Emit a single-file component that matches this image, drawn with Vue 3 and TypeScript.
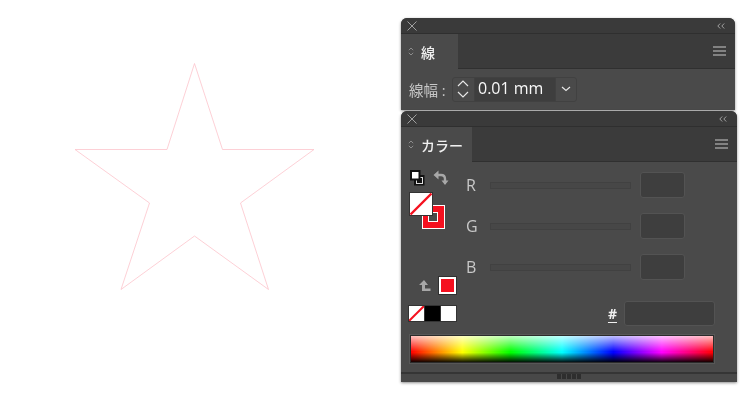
<script setup lang="ts">
// Illustrator-style canvas: a thin star on the artboard, stroke + colour panels docked right.
const channels = ['R', 'G', 'B']
</script>

<template>
  <div class="stage">
    <svg class="artboard" width="401" height="402" viewBox="0 0 401 402">
      <polygon
        points="194.5,63.5 222.5,149.5 314,149.5 240.5,203 268.5,289.5 194.5,236 121,289.5 149.5,203 75,149.5 167,149.5"
        fill="none"
        stroke="#fdc4cb"
        stroke-width="0.8"
      />
    </svg>

    <div class="dock">
      <section class="panel stroke-panel">
        <header class="titlebar">
          <svg class="close" width="10" height="10" viewBox="0 0 10 10"><path d="M0.5 0.5l9 9M9.5 0.5l-9 9" /></svg>
          <svg class="collapse" width="8" height="6" viewBox="0 0 8 6"><path d="M3.2 0.5L0.8 3l2.4 2.5M7.2 0.5L4.8 3l2.4 2.5" /></svg>
        </header>
        <div class="tabbar">
          <div class="tab tab-stroke">
            <svg class="updown" width="6" height="9" viewBox="0 0 6 9"><path d="M0.8 3.2L3 1l2.2 2.2M0.8 5.8L3 8l2.2-2.2" /></svg>
            <span>線</span>
          </div>
          <svg class="menu" width="13" height="10" viewBox="0 0 13 10"><path d="M0 1h13M0 5h13M0 9h13" /></svg>
        </div>
        <div class="stroke-body">
          <span class="stroke-label">線幅 :</span>
          <div class="weight">
            <div class="spin">
              <svg width="12" height="18" viewBox="0 0 12 18"><path d="M1 6L6 1l5 5M1 12l5 5 5-5" /></svg>
            </div>
            <div class="weight-value">0.01 mm</div>
            <div class="weight-drop">
              <svg width="10" height="6" viewBox="0 0 10 6"><path d="M1 1l4 3.5L9 1" /></svg>
            </div>
          </div>
        </div>
      </section>

      <section class="panel color-panel">
        <header class="titlebar">
          <svg class="close" width="10" height="10" viewBox="0 0 10 10"><path d="M0.5 0.5l9 9M9.5 0.5l-9 9" /></svg>
          <svg class="collapse" width="8" height="6" viewBox="0 0 8 6"><path d="M3.2 0.5L0.8 3l2.4 2.5M7.2 0.5L4.8 3l2.4 2.5" /></svg>
        </header>
        <div class="tabbar">
          <div class="tab tab-color">
            <svg class="updown" width="6" height="9" viewBox="0 0 6 9"><path d="M0.8 3.2L3 1l2.2 2.2M0.8 5.8L3 8l2.2-2.2" /></svg>
            <span>カラー</span>
          </div>
          <svg class="menu" width="13" height="10" viewBox="0 0 13 10"><path d="M0 1h13M0 5h13M0 9h13" /></svg>
        </div>
        <div class="color-body">
          <div class="color-top">
            <div class="tools">
              <svg class="fillstroke" width="40" height="62" viewBox="0 0 40 62">
                <!-- default colours -->
                <rect x="6" y="7" width="8.500" height="8.500" fill="#111" stroke="#111" stroke-width="2" />
                <rect x="7.500" y="8.500" width="6" height="6" fill="none" stroke="#ddd" />
                <rect x="2" y="2" width="8.500" height="8.500" fill="#fff" stroke="#111" stroke-width="2" />
                <!-- swap -->
                <path d="M27 6h5q4 0 4 4v3" fill="none" stroke="#a8a8a8" stroke-width="2.400" />
                <path d="M29.500 1.500L24.500 6l5 4.500zM32.500 11.500L36 16l3.500-4.500z" fill="#a8a8a8" />
                <!-- stroke -->
                <rect x="13.5" y="36.5" width="22" height="23" fill="#f5101f" stroke="#fff" />
                <rect x="19.5" y="43.5" width="9" height="9" fill="#4a4a4a" stroke="#fff" />
                <!-- fill -->
                <rect x="0.5" y="23.5" width="23" height="23" fill="#fff" stroke="#333" />
                <path d="M1.5 45.500L22.5 24.5" stroke="#f5101f" stroke-width="2.400" />
              </svg>
            </div>
            <div class="channels">
              <div v-for="c in channels" :key="c" class="channel">
                <span class="channel-name">{{ c }}</span>
                <div class="channel-track"></div>
                <div class="channel-field"></div>
              </div>
            </div>
          </div>

          <div class="gamut">
            <svg width="14" height="13" viewBox="0 0 14 13"><path d="M6 1L1 6h3v6h8.500V9.500H7V6h3z" fill="#a8a8a8" /></svg>
            <div class="gamut-swatch"></div>
          </div>

          <div class="quick">
            <div class="mini-swatches">
              <svg width="15" height="15" viewBox="0 0 15 15">
                <rect width="15" height="15" fill="#fff" />
                <path d="M0 15L15 0" stroke="#f5101f" stroke-width="2" />
              </svg>
              <i class="black"></i>
              <i class="white"></i>
            </div>
            <div class="hex">
              <span class="hash">#</span>
              <div class="hex-field"></div>
            </div>
          </div>

          <div class="spectrum-frame">
            <div class="spectrum"></div>
          </div>
        </div>
        <footer class="grip-bar">
          <div class="grip"><i v-for="n in 5" :key="n"></i></div>
        </footer>
      </section>
    </div>
  </div>
</template>

<style>
html,
body {
  margin: 0;
  background: #fff;
}
</style>

<style scoped>
.stage {
  width: 755px;
  height: 402px;
  display: flex;
  overflow: hidden;
  background: #fff;
  font-family: "Open Sans", "Noto Sans CJK JP", sans-serif;
}
.artboard {
  flex: none;
  display: block;
}
.dock {
  width: 336px;
  padding-top: 18px;
  display: flex;
  flex-direction: column;
  gap: 1px;
  will-change: transform;
}
.panel {
  background: #4a4a4a;
  border-radius: 6px 6px 0 0;
  box-shadow: 0 1px 3px rgba(0, 0, 0, 0.45);
  display: flex;
  flex-direction: column;
  overflow: hidden;
}
.stroke-panel {
  width: 334px;
  height: 92px;
}
.color-panel {
  width: 336px;
  height: 271px;
}
.titlebar {
  height: 16px;
  flex: none;
  box-sizing: border-box;
  background: #3a3a3a;
  border-bottom: 1px solid #2f2f2f;
  display: flex;
  align-items: center;
  justify-content: space-between;
  padding: 0 10px 0 6px;
}
.titlebar svg {
  fill: none;
  stroke: #a0a0a0;
  stroke-width: 1;
}
.tabbar {
  height: 35px;
  flex: none;
  background: #3b3b3b;
  border-bottom: 1px solid #303030;
  box-sizing: border-box;
  display: flex;
  align-items: stretch;
  justify-content: space-between;
  padding-right: 9px;
}
.tab {
  box-sizing: border-box;
  background: #4a4a4a;
  display: flex;
  align-items: center;
  gap: 7px;
  padding-left: 7px;
  margin-bottom: -1px;
  color: #f0f0f0;
  font-size: 14px;
  font-weight: 500;
}
.tab-stroke {
  width: 57px;
}
.tab-color {
  width: 71px;
}
.updown {
  fill: none;
  stroke: #8c8c8c;
  stroke-width: 1;
}
.menu {
  align-self: center;
  fill: none;
  stroke: #9a9a9a;
  stroke-width: 1.4;
}
.stroke-body {
  flex: 1;
  display: flex;
  align-items: center;
  padding: 0 0 1px 8px;
}
.stroke-label {
  width: 43px;
  flex: none;
  color: #c8c8c8;
  font-size: 14.500px;
  white-space: nowrap;
}
.weight {
  height: 25px;
  display: flex;
  border: 1px solid #414141;
  border-radius: 3px;
  box-sizing: border-box;
}
.spin {
  width: 22px;
  box-sizing: border-box;
  display: flex;
  align-items: center;
  justify-content: center;
  padding-right: 2px;
  border-right: 1px solid #414141;
}
.spin svg,
.weight-drop svg {
  fill: none;
  stroke: #e6e6e6;
  stroke-width: 1.2;
}
.weight-value {
  width: 80px;
  background: #3e3e3e;
  color: #f8f8f8;
  font-size: 16px;
  line-height: 21px;
  padding-left: 3px;
  box-sizing: border-box;
  white-space: nowrap;
}
.weight-drop {
  width: 21px;
  box-sizing: border-box;
  display: flex;
  align-items: center;
  justify-content: center;
  border-left: 1px solid #414141;
}
.color-body {
  flex: 1;
  display: flex;
  flex-direction: column;
  padding: 6px 22px 0 8px;
}
.color-top {
  display: flex;
  height: 109px;
}
.tools {
  width: 57px;
  flex: none;
}
.fillstroke {
  display: block;
  margin-top: 1px;
}
.channels {
  display: flex;
  flex-direction: column;
  gap: 15px;
  padding-top: 4px;
}
.channel {
  display: flex;
  align-items: center;
  height: 26px;
}
.channel-name {
  width: 24px;
  color: #c8c8c8;
  font-size: 16px;
  line-height: 26px;
}
.channel-track {
  width: 141px;
  height: 7px;
  box-sizing: border-box;
  background: #474747;
  border: 1px solid #414141;
}
.channel-field {
  width: 45px;
  height: 26px;
  margin-left: 9px;
  box-sizing: border-box;
  background: #3e3e3e;
  border: 1px solid #535353;
  border-radius: 3px;
}
.gamut {
  display: flex;
  align-items: center;
  gap: 7px;
  padding-left: 9px;
  height: 17px;
}
.gamut svg {
  display: block;
}
.gamut-swatch {
  width: 17px;
  height: 17px;
  box-sizing: border-box;
  background: #f5101f;
  border: 2px solid #fff;
  outline: 1px solid #303030;
}
.quick {
  display: flex;
  justify-content: space-between;
  align-items: center;
  height: 25px;
  margin-top: 7px;
}
.mini-swatches {
  display: flex;
  gap: 1px;
  padding: 1px;
  margin-left: -1px;
  background: #333;
}
.mini-swatches svg,
.mini-swatches i {
  display: block;
  width: 15px;
  height: 15px;
}
.black {
  background: #000;
}
.white {
  background: #fff;
}
.hex {
  display: flex;
  align-items: center;
  gap: 7px;
}
.hash {
  color: #f0f0f0;
  font-size: 14px;
  font-weight: 700;
  text-decoration: underline;
  text-underline-offset: 3px;
}
.hex-field {
  width: 91px;
  height: 25px;
  box-sizing: border-box;
  background: #3e3e3e;
  border: 1px solid #535353;
  border-radius: 3px;
}
.spectrum-frame {
  width: 304px;
  height: 28px;
  margin: 9px 0 0 1px;
  box-sizing: border-box;
  border: 1px solid #2b2b2b;
  outline: 1px solid #575757;
}
.spectrum {
  width: 100%;
  height: 100%;
  background:
    linear-gradient(
      to bottom,
      rgba(255, 255, 255, 0.75) 0%,
      rgba(255, 255, 255, 0) 60%,
      rgba(0, 0, 0, 0) 64%,
      rgba(0, 0, 0, 0.92) 100%
    ),
    linear-gradient(
      to right,
      #ff0000 0%,
      #ffff00 17%,
      #00ff00 33%,
      #00ffff 50%,
      #0000ff 67%,
      #ff00ff 83%,
      #ff0000 100%
    );
}
.grip-bar {
  height: 10px;
  flex: none;
  box-sizing: border-box;
  background: #484848;
  border-top: 2px solid #353535;
  display: flex;
  justify-content: center;
  padding-right: 1px;
}
.grip {
  display: flex;
  gap: 1px;
}
.grip i {
  width: 4px;
  height: 5px;
  background: #2e2e2e;
}
</style>
